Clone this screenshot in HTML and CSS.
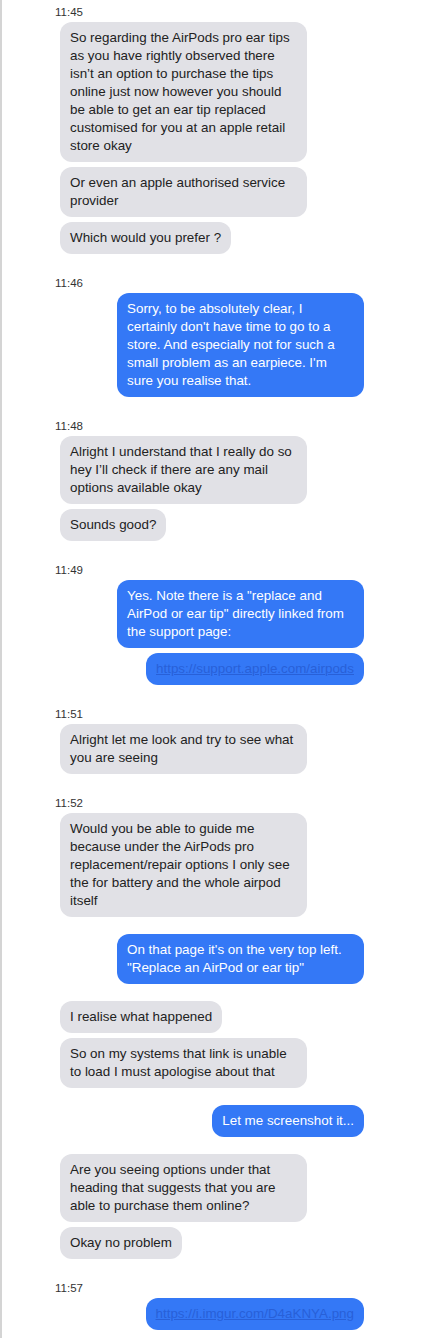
FILE: index.html
```html
<!DOCTYPE html>
<html lang="en">

<head>
    <meta charset="UTF-8">
    <meta name="viewport" content="width=device-width, initial-scale=1.0">
    <title>Chat transcript</title>
    <link rel="stylesheet" href="styles.css">
</head>

<body>
    <section id="chat">

        <!-- 11:45 -->
        <div class="time">11:45</div>
        <div class="group them">
            <div class="bubble">So regarding the AirPods pro ear tips as you have rightly observed there isn’t an option to purchase the tips online just now however you should be able to get an ear tip replaced customised for you at an apple retail store okay</div>
            <div class="bubble">Or even an apple authorised service provider</div>
            <div class="bubble">Which would you prefer ?</div>
        </div>

        <!-- 11:46 -->
        <div class="time">11:46</div>
        <div class="group me">
            <div class="bubble">Sorry, to be absolutely clear, I certainly don't have time to go to a store. And especially not for such a small problem as an earpiece. I'm sure you realise that.</div>
        </div>

        <!-- 11:48 -->
        <div class="time">11:48</div>
        <div class="group them">
            <div class="bubble">Alright I understand that I really do so hey I’ll check if there are any mail options available okay</div>
            <div class="bubble">Sounds good?</div>
        </div>

        <!-- 11:49 -->
        <div class="time">11:49</div>
        <div class="group me">
            <div class="bubble">Yes. Note there is a "replace and AirPod or ear tip" directly linked from the support page:</div>
            <div class="bubble"><a href="#">https://support.apple.com/airpods</a></div>
        </div>

        <!-- 11:51 -->
        <div class="time">11:51</div>
        <div class="group them">
            <div class="bubble">Alright let me look and try to see what you are seeing</div>
        </div>

        <!-- 11:52 -->
        <div class="time">11:52</div>
        <div class="group them">
            <div class="bubble">Would you be able to guide me because under the AirPods pro replacement/repair options I only see the for battery and the whole airpod itself</div>
        </div>
        <div class="group me">
            <div class="bubble">On that page it's on the very top left. "Replace an AirPod or ear tip"</div>
        </div>
        <div class="group them">
            <div class="bubble">I realise what happened</div>
            <div class="bubble">So on my systems that link is unable to load I must apologise about that</div>
        </div>
        <div class="group me">
            <div class="bubble">Let me screenshot it...</div>
        </div>
        <div class="group them">
            <div class="bubble">Are you seeing options under that heading that suggests that you are able to purchase them online?</div>
            <div class="bubble">Okay no problem</div>
        </div>

        <!-- 11:57 -->
        <div class="time">11:57</div>
        <div class="group me">
            <div class="bubble"><a href="#">https://i.imgur.com/D4aKNYA.png</a></div>
        </div>

    </section>
</body>

</html>
```

FILE: styles.css
```css
body,
html {
    padding: 0;
    margin: 0;
}

body {
    background: #fff;
    font-family: "Liberation Sans", Arial, sans-serif;
    font-size: 13.4px;
    line-height: 18px;
}

#chat {
    border-left: 2px solid #d4d4d4;
    min-height: 1338px;
    box-sizing: border-box;
    padding: 5px 61px 6px 53px;
    display: flex;
    flex-direction: column;
}

.time {
    font-size: 11.5px;
    line-height: 14px;
    color: #333;
    margin: 22px 0 3px;
}

.time:first-child {
    margin-top: 0;
}

.group {
    display: flex;
    flex-direction: column;
    gap: 5px;
}

.group + .group {
    margin-top: 17px;
}

.them {
    align-items: flex-start;
    padding-left: 5px;
}

.me {
    align-items: flex-end;
}

.bubble {
    max-width: 227px;
    padding: 7px 10px;
    border-radius: 12px;
}

.them .bubble {
    background: #e1e1e6;
    color: #222;
}

.me .bubble {
    background: #3478f6;
    color: #fff;
}

.bubble a {
    color: #2860d8;
    text-decoration: underline;
}
```
